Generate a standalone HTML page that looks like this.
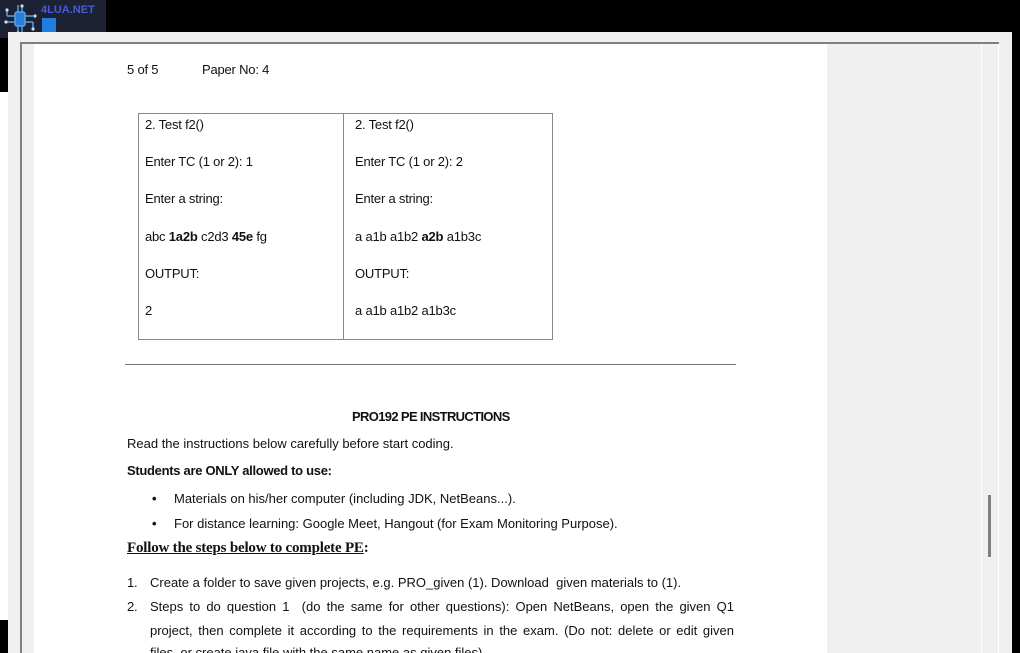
<!DOCTYPE html>
<html style="overflow:hidden;width:1020px;height:653px"><head><meta charset="utf-8"><style>
*{margin:0;padding:0;box-sizing:border-box}
html,body{overflow:hidden}
body{width:1020px;height:653px;background:#000;position:relative;font-family:"Liberation Sans",Arial,sans-serif;color:#111}
.t{position:absolute;font-size:13px;letter-spacing:-0.2px;white-space:nowrap;line-height:16px}
.p{letter-spacing:0}
b{font-weight:bold}
</style></head><body>
<div style="position:absolute;left:0;top:0;width:106px;height:38px;background:#1c2233"></div>
<svg style="position:absolute;left:2px;top:2px" width="36" height="34" viewBox="0 0 36 34"><g stroke="#5aa0e0" stroke-width="1.5" fill="none"><rect x="13" y="10" width="10" height="14" rx="2" fill="#2a7fd8"/><path d="M13 14H5M13 20H4M23 14H31M23 20H31M16 10V3M20 10V4M16 24V31M20 24V31M5 14V8M31 20V27"/></g><g fill="#cde"><circle cx="5" cy="8" r="1.6"/><circle cx="4" cy="20" r="1.6"/><circle cx="31" cy="27" r="1.6"/><circle cx="33" cy="14" r="1.6"/><circle cx="20" cy="4" r="1.6"/><circle cx="16" cy="31" r="1.6"/></g></svg>
<div style="position:absolute;left:41px;top:4px;font-size:11px;font-weight:bold;color:#4a5ad8">4LUA.NET</div>
<div style="position:absolute;left:42px;top:18px;width:14px;height:14px;background:#1f7fe0"></div>
<div style="position:absolute;left:8px;top:32px;width:1004px;height:621px;background:#f0f0f0"></div>
<div style="position:absolute;left:0;top:92px;width:8px;height:528px;background:#fff"></div>
<div style="position:absolute;left:20px;top:42px;width:979px;height:2px;background:#808080"></div>
<div style="position:absolute;left:20px;top:42px;width:2px;height:611px;background:#808080"></div>
<div style="position:absolute;left:34px;top:44px;width:793px;height:609px;background:#fff"></div>
<div style="position:absolute;left:981px;top:44px;width:1px;height:609px;background:#fff"></div>
<div style="position:absolute;left:998px;top:44px;width:1px;height:609px;background:#fff"></div>
<div style="position:absolute;left:988px;top:495px;width:3px;height:62px;background:#808080"></div>
<div class="t" style="left:127px;top:62px">5 of 5</div>
<div class="t" style="left:202px;top:62px">Paper No: 4</div>
<div style="position:absolute;left:138px;top:113px;width:415px;height:227px;border:1px solid #888"></div>
<div style="position:absolute;left:343px;top:113px;width:1px;height:227px;background:#888"></div>
<div class="t" style="left:145px;top:117px">2. Test f2()</div>
<div class="t" style="left:145px;top:154px">Enter TC (1 or 2): 1</div>
<div class="t" style="left:145px;top:191px">Enter a string:</div>
<div class="t" style="left:145px;top:229px">abc <b>1a2b</b> c2d3 <b>45e</b> fg</div>
<div class="t" style="left:145px;top:266px">OUTPUT:</div>
<div class="t" style="left:145px;top:303px">2</div>
<div class="t" style="left:355px;top:117px">2. Test f2()</div>
<div class="t" style="left:355px;top:154px">Enter TC (1 or 2): 2</div>
<div class="t" style="left:355px;top:191px">Enter a string:</div>
<div class="t" style="left:355px;top:229px">a a1b a1b2 <b>a2b</b> a1b3c</div>
<div class="t" style="left:355px;top:266px">OUTPUT:</div>
<div class="t" style="left:355px;top:303px">a a1b a1b2 a1b3c</div>
<div style="position:absolute;left:125px;top:364px;width:611px;height:1px;background:#777"></div>
<div class="t" style="left:352px;top:409px;font-weight:bold;letter-spacing:-0.65px">PRO192 PE INSTRUCTIONS</div>
<div class="t p" style="left:127px;top:436px">Read the instructions below carefully before start coding.</div>
<div class="t" style="left:127px;top:463px;font-weight:bold;letter-spacing:-0.3px">Students are ONLY allowed to use:</div>
<div class="t" style="left:152px;top:491px;font-weight:bold">•</div>
<div class="t p" style="left:174px;top:491px">Materials on his/her computer (including JDK, NetBeans...).</div>
<div class="t" style="left:152px;top:516px;font-weight:bold">•</div>
<div class="t p" style="left:174px;top:516px">For distance learning: Google Meet, Hangout (for Exam Monitoring Purpose).</div>
<div class="t" style="left:127px;top:540px;font-family:'Liberation Serif',serif;font-weight:bold;font-size:15px;letter-spacing:-0.2px"><u>Follow the steps below to complete PE</u>:</div>
<div class="t" style="left:127px;top:575px">1.</div>
<div class="t p" style="left:150px;top:575px">Create a folder to save given projects, e.g. PRO_given (1). Download&nbsp; given materials to (1).</div>
<div class="t" style="left:127px;top:599px">2.</div>
<div class="t p" style="left:150px;top:599px;width:584px;text-align:justify;text-align-last:justify;white-space:normal">Steps to do question 1&nbsp; (do the same for other questions): Open NetBeans, open the given Q1</div>
<div class="t p" style="left:150px;top:623px;width:584px;text-align:justify;text-align-last:justify;white-space:normal">project, then complete it according to the requirements in the exam. (Do not: delete or edit given</div>
<div class="t p" style="left:150px;top:645px">files, or create java file with the same name as given files)</div>
</body></html>
